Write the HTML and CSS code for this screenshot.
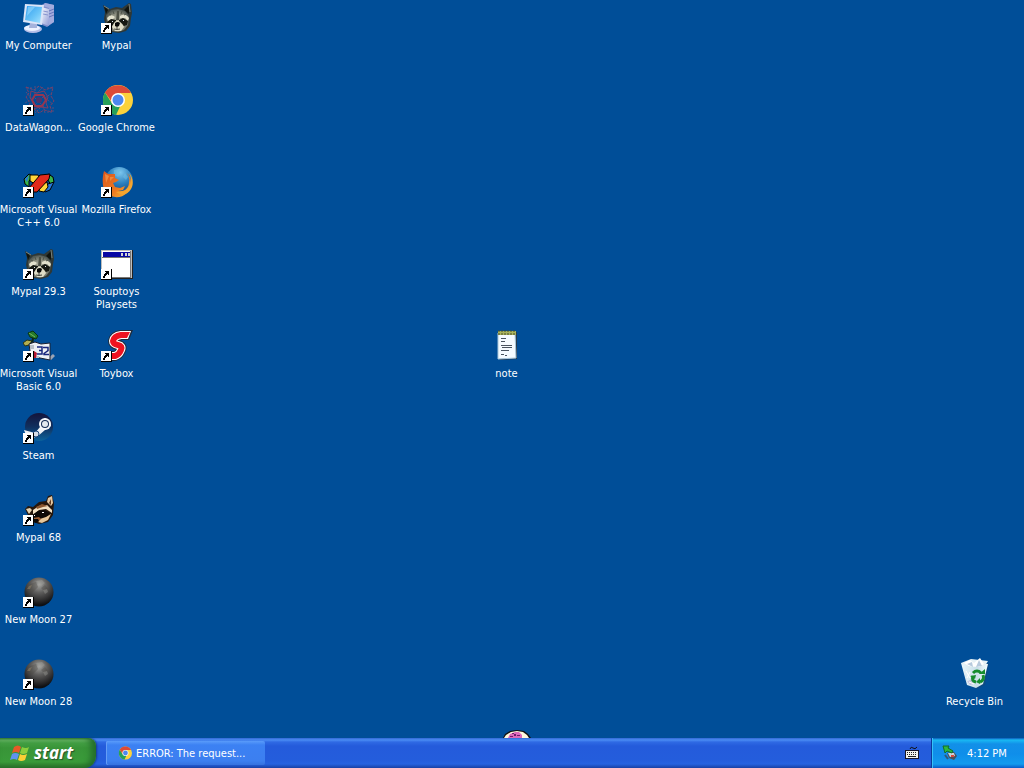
FILE: index.html
```html
<!DOCTYPE html>
<html lang="en">
<head>
<meta charset="utf-8">
<meta name="viewport" content="width=device-width, initial-scale=1">
<title>Desktop</title>
<link rel="stylesheet" href="styles.css">
</head>
<body>
<svg class="sprites" aria-hidden="true">
  <defs>
    <linearGradient id="screen" x1="0" y1="0" x2="1" y2="1"><stop offset="0" stop-color="#2f9df0"/><stop offset=".6" stop-color="#6cc6f8"/><stop offset="1" stop-color="#a8e4ff"/></linearGradient>
    <linearGradient id="case" x1="0" y1="0" x2="1" y2="1"><stop offset="0" stop-color="#ffffff"/><stop offset="1" stop-color="#8f9bd6"/></linearGradient>
    <radialGradient id="moonShade" cx=".5" cy=".25" r=".7"><stop offset="0" stop-color="#a3a3a0"/><stop offset=".4" stop-color="#5e5d5c"/><stop offset="1" stop-color="#0f0f11"/></radialGradient>
    <radialGradient id="globe" cx=".55" cy=".2" r=".8"><stop offset="0" stop-color="#7cc6ee"/><stop offset=".5" stop-color="#2b7fbd"/><stop offset="1" stop-color="#123f78"/></radialGradient>
    <linearGradient id="fox" x1="0" y1="0" x2="1" y2="1"><stop offset="0" stop-color="#d9541e"/><stop offset=".6" stop-color="#ee7a20"/><stop offset="1" stop-color="#f8c23a"/></linearGradient>
    <linearGradient id="steamBg" x1="0" y1="0" x2="0" y2="1"><stop offset="0" stop-color="#14143c"/><stop offset=".5" stop-color="#10305f"/><stop offset="1" stop-color="#0c639b"/></linearGradient>
    <linearGradient id="bin" x1="0" y1="0" x2="1" y2="0"><stop offset="0" stop-color="#e9f6fb"/><stop offset=".6" stop-color="#c8dfe8"/><stop offset="1" stop-color="#f6fdff"/></linearGradient>
    <radialGradient id="fur" cx=".5" cy=".55" r=".6"><stop offset="0" stop-color="#c5c5b2"/><stop offset=".6" stop-color="#85887a"/><stop offset="1" stop-color="#3d4644"/></radialGradient>
  </defs>
  <symbol id="arrow" viewBox="0 0 32 32">
    <path fill="#000" d="M0 21h11v11H0z"/><path fill="#fff" d="M0 21h10v10H0z"/>
    <path fill="#000" d="M4 23h4v4H7v-1H6v1H5v1H4v2H2v-2h1v-2h1v-1h1v-1H4z"/>
  </symbol>
  <symbol id="computer" viewBox="0 0 32 32">
    <path d="M17 4l5-3 9 2v17l-7 5-7-3z" fill="#7f8dcb"/>
    <path d="M22 1l9 2v17l-5 3V6l-6-2z" fill="#a2abdd"/>
    <path d="M18 5l8 2v17l-8-3z" fill="url(#case)"/>
    <path d="M26 9l5-2M26 12l5-2M26 15l5-2" stroke="#6675bb"/>
    <path d="M20 9l5 1M20 12l5 1" stroke="#8794ce"/>
    <ellipse cx="10" cy="27" rx="9" ry="4" fill="#b4bee8"/><ellipse cx="9" cy="26" rx="8" ry="3" fill="#edf2ff"/>
    <path d="M7 20l7 1v5H6z" fill="#a5b3dc"/>
    <path d="M2 2l19 1-2 20L0 20z" fill="#dbe5f8"/>
    <path d="M4 4l15 1-2 16L2 18z" fill="url(#screen)"/>
    <path d="M5 5h7l-8 9z" fill="#9bdcff" opacity=".6"/>
  </symbol>
  <symbol id="raccoon" viewBox="0 0 32 32">
    <path d="M2 3l7 4 6-2 6 1 7-5 2 1 1 9-1 5-1 8-4 5-7 2-7-1-6-5-2-8 1-7z" fill="#2f3836"/>
    <path d="M3 4l4 4-2 4zM28 3l-5 5 5 4z" fill="#10140f"/>
    <path d="M28 2l1 8M3 4l5 3" stroke="#77807a" fill="none"/>
    <path d="M5 13l5-5 7-1 7 2 4 5-1 9-4 5-6 2-6-1-5-6z" fill="url(#fur)"/>
    <path d="M6 16q4-5 8-1l-2 2-5 2zM19 14q5-4 9 2l-1 3-3-3-5 0z" fill="#e2e1cd"/>
    <path d="M6 20l4-3 5 1v3l-4 3-4 1zM18 18l4-2 5 3-1 4-3 1-5-3z" fill="#151812"/>
    <path d="M11 25q2-5 4-6h3q3 2 5 6l-3 4h-6z" fill="#dedcc6"/>
    <path d="M16 9h2v9h-3z" fill="#4b4f44"/>
    <path d="M14 21q3-2 5 0l-1 3-2 1-2-1z" fill="#080908"/>
    <path d="M16 24v3M13 27q3 1 6 0" stroke="#42443a" fill="none"/>
    <path d="M12 9l1 3M21 9l-1 3M8 12l2 1M25 12l-2 1" stroke="#4f554b"/>
    <path d="M11 19h1v1h-1zM22 18h1v1h-1z" fill="#dce3ea"/>
  </symbol>
  <symbol id="wagon" viewBox="0 0 32 32">
    <g fill="none" stroke="#7f3e63" stroke-width="1">
      <path d="M3 3l8 3 5-4 6 4 8-3-2 9 3 5-4 5 2 6-8-2-5 3-5-4-7 2 3-8-4-6 3-4z" stroke-dasharray="3 1"/>
      <path d="M8 7l6 2 7-2 4 6-2 6 2 5-8-1-7 2 1-7-4-4z"/>
      <path d="M3 8l6 7-7 4M12 2v9l8-8M29 9l-7 5 8 6M22 29l-2-8-8 8M4 24l8-4M10 12l10 10M22 11L11 22M4 4h5M24 4h5M24 28h6v-6" stroke="#594c7c" stroke-dasharray="2 1"/>
      <path d="M12 11h8l3 5-4 6h-7l-3-6z" stroke="#963550" stroke-width="2"/>
    </g>
    <circle cx="16" cy="16" r="3" fill="#50346a"/>
  </symbol>
  <symbol id="chrome" viewBox="0 0 32 32">
    <circle cx="17" cy="16" r="15" fill="#fcd23c"/>
    <path d="M4 8.500l7 11 8 3-4 8.500A15 15 0 0 1 4 8.500z" fill="#26a05a"/>
    <path d="M4 8.500A15 15 0 0 1 30 9H17l-6 9z" fill="#dc4a38"/>
    <circle cx="17" cy="16" r="7" fill="#fff"/><circle cx="17" cy="16" r="5.500" fill="#4d88ee"/>
  </symbol>
  <symbol id="vcpp" viewBox="0 0 32 32">
    <g stroke="#000" stroke-linejoin="round">
      <path d="M1 13l5-5 4 2-4 5v6l-4-3z" fill="#39b54a"/>
      <path d="M7 9h8l2 4-5 5-5-3z" fill="#ffd63a"/>
      <path d="M25 8l5 3 1 5-3 3-3-5z" fill="#39b54a"/>
      <path d="M31 16l-4 8-5 2-2-3 5-5z" fill="#2878d8"/>
      <path d="M17 19l7-3 1 5-4 5-5-1z" fill="#ffd63a"/>
      <path d="M6 22L17 9l10-1-1 5-12 13H8z" fill="#e22a1b"/>
    </g>
    <path d="M2 13l4-4-2 7z" fill="#2878d8"/>
  </symbol>
  <symbol id="firefox" viewBox="0 0 32 32">
    <circle cx="18" cy="15" r="14" fill="url(#globe)"/>
    <path d="M13 4l6-1-2 3 3 2-3 3-4-2zM24 7l3 4-2 3-3-3z" fill="#74bfe6" opacity=".5"/>
    <path d="M3 5l4 3h7v4l4 2-3 2-3 1 2 4 5 1 5-2-2 4-5 1c7 1 11-3 11-9 1-4-1-8-3-10 7 6 6 16 1 21-6 6-16 5-21 0C1 22 1 12 3 5z" fill="url(#fox)"/>
    <path d="M28 7c4 7 1 15-5 18l-8 1c5 4 12 3 15-3 3-5 2-12-2-16z" fill="#f4a52f"/>
    <path d="M4 8l4 2-3 7zM9 11h4l-4 4z" fill="#f08a3e"/>
  </symbol>
  <symbol id="window" viewBox="0 0 32 32">
    <path d="M0 2h32v29H0z" fill="#222"/><path d="M0 2h31v28H0z" fill="#bdbdbd"/><path d="M1 3h29v26H1z" fill="#fff"/>
    <path d="M2 4h28v5H2z" fill="#0808a4"/><path d="M20 5h2v3h-2zM24 5h2v3h-2zM27 5h2v3h-2z" fill="#d4d4d4"/>
    <path d="M1 9h29v1H1zM30 3v27H2v-1h27V3z" fill="#777"/>
  </symbol>
  <symbol id="vb" viewBox="0 0 32 32">
    <path d="M5 3l5-2 5 5-2 3-6-2z" fill="#247a2d" stroke="#08350d"/><path d="M6 3l6 4" stroke="#7ab557"/>
    <path d="M0 13l4-3 5 1-3 4-4 1z" fill="#b3ae50" stroke="#2a3510"/>
    <path d="M10 8l-1 7" stroke="#102815" stroke-width="2"/>
    <path d="M24 29l6-5 2 2-4 4z" fill="#9ba4b5"/>
    <path d="M6 14l6-2 6 2 9-1v17l-15-3-5-6z" fill="#eef1f5" stroke="#1b2030"/>
    <path d="M7 15h4v4H7zM13 26h3v2h-3z" fill="#bbc2c9"/><path d="M11 21l3 2-1 5h-3z" fill="#b41830"/>
    <path d="M14 17h5v7h-5M16 20.500h3M20 17.500h5v3l-4 3v1h5" fill="none" stroke="#17267c" stroke-width="1.500"/>
  </symbol>
  <symbol id="toybox" viewBox="0 0 32 32">
    <g fill="none" stroke-linejoin="round">
      <path d="M28 5H20Q13 6 12 11Q12 14 17 15Q22 16 20 20Q18 25 14 26H6" stroke="#202c3d" stroke-width="10"/>
      <path d="M28 5H20Q13 6 12 11Q12 14 17 15Q22 16 20 20Q18 25 14 26H6" stroke="#fff" stroke-width="8"/>
      <path d="M28 5H20Q13 6 12 11Q12 14 17 15Q22 16 20 20Q18 25 14 26H6" stroke="#ee1220" stroke-width="6"/>
    </g>
    <path d="M28 0h4l-4 10h-3z" fill="#202c3d"/><path d="M25 1h5l-3 8h-4z" fill="#fff"/><path d="M24 2h5l-3 6h-4z" fill="#ee1220"/>
  </symbol>
  <symbol id="steam" viewBox="0 0 32 32">
    <circle cx="16" cy="15" r="14" fill="url(#steamBg)"/>
    <path d="M1 18l11 3 5-6v-5l5-4 5 3 1 5-6 4-7 6-5 2-7-3z" fill="#eef2f6"/>
    <circle cx="22" cy="12" r="6" fill="#f5f7fa"/><circle cx="22" cy="12" r="4" fill="#142c55"/><circle cx="22" cy="12" r="3" fill="#e3e9ef"/>
    <circle cx="13" cy="22" r="3" fill="#d5dde6" stroke="#1a4376"/>
  </symbol>
  <symbol id="raccoon68" viewBox="0 0 32 32">
    <path d="M2 15l3-3 5 1 6-5 7-1 2-5 4-1 2 8-1 12-5 7-9 2-6-2-5-7z" fill="#26170d"/>
    <path d="M24 8l1-4 4-2 1 7-2 3z" fill="#e5c8a2"/><path d="M26 9l2-4v6z" fill="#61391f"/>
    <path d="M3 15l4-1 2 2-3 4z" fill="#e6d3b2"/>
    <path d="M10 16l6-4 8-1 5 5v3l-6-4-7 1-6 5z" fill="#f2e0c2"/>
    <path d="M13 13l6-3 6 2-5 1-6 2z" fill="#8b572f"/>
    <path d="M9 21l6-4 6-1 6 3-3 4-7 1-5 2z" fill="#0d0907"/>
    <path d="M17 25l6-2 5-3-3 6-6 3-4-1z" fill="#e6c79b"/><path d="M10 24l6-1 2 2-3 3h-4z" fill="#9b5b33"/>
    <path d="M11 25h4l1 2-3 2-2-1z" fill="#080706"/><path d="M19 18h2v1h-2zM11 21h1v1h-1z" fill="#fff"/>
  </symbol>
  <symbol id="moon" viewBox="0 0 32 32">
    <circle cx="16" cy="16" r="14.500" fill="url(#moonShade)"/>
    <path d="M3 14l4-6 6-2 2 5-5 5-4 1zM18 12l4-3 3 4-4 2z" fill="#4a4742" opacity=".35"/>
    <path d="M13 5l6-1 3 3-4 3zM20 14l4-1 1 3-3 2z" fill="#aaa9a4" opacity=".35"/>
    <path d="M4 13l2-3 3-1-2 4z" fill="#95856a" opacity=".5"/>
  </symbol>
  <symbol id="note" viewBox="0 0 32 32">
    <path d="M8 3l18-1v27l-17 1z" fill="#263c4e"/>
    <path d="M7 3l17-1 1 26-18 1z" fill="#f5fbff" stroke="#a8c7dc"/>
    <path d="M7 1h18v4H7z" fill="#a9b45c"/><path d="M8 0v5M11 0v5M14 0v5M17 0v5M20 0v5M23 0v5" stroke="#464c2c" stroke-dasharray="2 1"/>
    <path d="M10 8.500h5M10 11.500h4M10 15.500h11M11 17.500h10M10 20.500h8M10 24.500h3M14 25.500h2" stroke="#48535f"/>
  </symbol>
  <symbol id="recycle" viewBox="0 0 32 32">
    <path d="M4 6l26-1-4 22-8 4-9-4z" fill="#17466f" opacity=".5"/>
    <path d="M2 5l27 1-5 20-7 4-9-3z" fill="url(#bin)"/>
    <path d="M2 5l10-4 17 2-3 5-13 1z" fill="#e7f1f5"/>
    <path d="M5 5l6-3 4 3 6-5 4 6-5 3-10-1z" fill="#fff"/><path d="M8 6l5-2 1 5zM20 2l3 6-6 1z" fill="#b7cadd"/>
    <path d="M5 11l3 13 4-3 3 5-4 1-3-4z" fill="#c7c4e0"/><path d="M7 13l4 7M11 14l-3 6M10 24l5 2" stroke="#fff"/>
    <g fill="none" stroke="#158c2d" stroke-width="3"><path d="M14 15q4-4 8 0M24 17q2 5-3 7M17 24q-5-1-3-6"/></g>
    <path d="M20 16h6v-5zM21 20v6l-4-2zM11 18l6-1-1 4z" fill="#158c2d"/>
  </symbol>
  <symbol id="flag" viewBox="0 0 20 20">
    <path d="M4 4q4-3 7 0L9 10q-3-2-7 0z" fill="#e65a27"/><path d="M12 4q4 2 7 0l-2 6q-4 2-7 0z" fill="#8bce3d"/>
    <path d="M2 11q3-2 7 0l-2 6q-3-2-7 0z" fill="#5f93ee"/><path d="M10 11q3 2 7 0l-2 6q-4 2-7 0z" fill="#fbcf35"/>
  </symbol>
</svg>

<main class="desktop">
  <div class="icon-grid">
    <button class="shortcut"><svg><use href="#computer"/></svg><span>My Computer</span></button>
    <button class="shortcut"><svg><use href="#wagon"/><use href="#arrow"/></svg><span>DataWagon...</span></button>
    <button class="shortcut"><svg><use href="#vcpp"/><use href="#arrow"/></svg><span>Microsoft Visual<br>C++ 6.0</span></button>
    <button class="shortcut"><svg><use href="#raccoon"/><use href="#arrow"/></svg><span>Mypal 29.3</span></button>
    <button class="shortcut"><svg><use href="#vb"/><use href="#arrow"/></svg><span>Microsoft Visual<br>Basic 6.0</span></button>
    <button class="shortcut"><svg><use href="#steam"/><use href="#arrow"/></svg><span>Steam</span></button>
    <button class="shortcut"><svg><use href="#raccoon68"/><use href="#arrow"/></svg><span>Mypal 68</span></button>
    <button class="shortcut"><svg><use href="#moon"/><use href="#arrow"/></svg><span>New Moon 27</span></button>
    <button class="shortcut"><svg><use href="#moon"/><use href="#arrow"/></svg><span>New Moon 28</span></button>
    <button class="shortcut"><svg><use href="#raccoon"/><use href="#arrow"/></svg><span>Mypal</span></button>
    <button class="shortcut"><svg><use href="#chrome"/><use href="#arrow"/></svg><span>Google Chrome</span></button>
    <button class="shortcut"><svg><use href="#firefox"/><use href="#arrow"/></svg><span>Mozilla Firefox</span></button>
    <button class="shortcut"><svg><use href="#window"/><use href="#arrow"/></svg><span>Souptoys<br>Playsets</span></button>
    <button class="shortcut"><svg><use href="#toybox"/><use href="#arrow"/></svg><span>Toybox</span></button>
  </div>
  <button class="shortcut placed note"><svg><use href="#note"/></svg><span>note</span></button>
  <button class="shortcut placed recycle"><svg><use href="#recycle"/></svg><span>Recycle Bin</span></button>
  <svg class="toy" viewBox="0 0 28 8" aria-hidden="true">
    <path d="M0 8l2-4 5-3 7-1 7 1 4 3 3 4z" fill="#111"/><path d="M1 8l2-3 5-3 6-1 6 1 4 3 2 3z" fill="#fff8dc"/>
    <path d="M5 8l2-4 5-2h4l3 3v3z" fill="#df68ba"/><path d="M7 6h3v1H7zM11 4h2v2h-2zM14 5h3v1h-3zM9 3h2v1H9z" fill="#6e1e6c"/>
  </svg>
</main>

<footer class="taskbar">
  <button class="start"><svg><use href="#flag"/></svg><span>start</span></button>
  <button class="task"><svg><use href="#chrome"/></svg><span>ERROR: The request...</span></button>
  <button class="keyboard" aria-label="Language bar">
    <svg viewBox="0 0 14 14" aria-hidden="true"><path d="M5 3q1-3 3-1t4-1" fill="none" stroke="#111"/><path d="M0 4h14v9H0z" fill="#151528"/><path d="M1 5h12v7H1z" fill="#f4f4ee"/><path d="M2 6.500h10M2 8.500h10" stroke="#222" stroke-dasharray="1 1"/><path d="M3 10.500h8" stroke="#222"/></svg>
  </button>
  <div class="tray">
    <svg viewBox="0 0 16 16" aria-hidden="true"><path d="M5 8l7-1 3 4-3 4-5-2z" fill="#48515d"/><path d="M6 8h6l1 3-5 1z" fill="#c9d3dc"/><path d="M9 10h3v2H9z" fill="#d84a3a"/><path d="M1 1h6l-1 2 5 3-1 2-5-2-2 2z" fill="#2db83d" stroke="#116d29"/><path d="M3 10l3 4" stroke="#31577b" stroke-width="2"/></svg>
    <time>4:12 PM</time>
  </div>
</footer>
</body>
</html>
```
FILE: styles.css
```css
* { box-sizing: border-box; }

body {
  margin: 0;
  min-height: 100vh;
  display: flex;
  flex-direction: column;
  background: #004e98;
  color: #fff;
  font: 11px/13px Tahoma, "DejaVu Sans Condensed", "DejaVu Sans", sans-serif;
}

button {
  border: 0;
  padding: 0;
  background: none;
  color: inherit;
  font: inherit;
}

.sprites { position: absolute; width: 0; height: 0; }

.desktop {
  position: relative;
  flex: 1;
  overflow: hidden;
}

.icon-grid {
  display: grid;
  grid-auto-flow: column;
  grid-template-rows: repeat(9, 82px);
  grid-auto-columns: 78px;
  justify-content: start;
}

.shortcut {
  display: flex;
  flex-direction: column;
  align-items: center;
  gap: 5px;
  width: 78px;
  height: 82px;
  padding: 2px 1px 0 0;
  white-space: nowrap;
}

.shortcut svg { width: 32px; height: 32px; flex: none; }

.placed { position: absolute; }
.note { left: 468px; top: 328px; }
.recycle { right: 10px; top: 656px; }

.toy {
  position: absolute;
  left: 503px;
  bottom: 0;
  width: 28px;
  height: 8px;
}

.taskbar {
  display: flex;
  height: 30px;
  background: linear-gradient(#3168d5 0, #4a8cf3 2px, #2f6ae4 4px, #245bdb 8px, #245ddc 22px, #2663e0 26px, #1941a5 30px);
}

.start {
  display: flex;
  align-items: center;
  gap: 4px;
  width: 96px;
  padding: 0 8px 0 10px;
  border-radius: 0 8px 12px 0;
  background: linear-gradient(#388238 0, #6dbd6a 2px, #44a044 5px, #389438 10px, #3a9b3a 24px, #2a7229 30px);
  box-shadow: inset -5px 0 6px #246d2a, 1px 0 2px #153c8c;
  font: italic bold 17px/24px "Open Sans", sans-serif;
  text-shadow: 1px 1px 1px #24512a;
}

.start svg { width: 20px; height: 20px; flex: none; }

.task {
  display: flex;
  align-items: center;
  gap: 4px;
  width: 159px;
  height: 24px;
  margin: 3px 0 0 10px;
  padding: 0 12px;
  border-radius: 2px;
  background: linear-gradient(#5a9bfa, #3c81f3 4px, #3c7ff0 20px, #3672df);
  box-shadow: inset 1px 0 #659df6;
  white-space: nowrap;
}

.task svg { width: 14px; height: 14px; flex: none; }

.keyboard {
  display: grid;
  place-items: center;
  width: 38px;
  margin-left: auto;
}

.keyboard svg { width: 14px; height: 14px; }

.tray {
  display: flex;
  align-items: center;
  gap: 9px;
  width: 93px;
  padding: 0 10px;
  border-left: 1px solid #0b3a9c;
  background: linear-gradient(#0c59b9 0, #19b9f3 2px, #1290e8 6px, #0f8eea 16px, #129bee 26px, #095bc9 30px);
  box-shadow: inset 1px 0 #36c3f8;
  white-space: nowrap;
}

.tray svg { width: 16px; height: 16px; flex: none; }
```
